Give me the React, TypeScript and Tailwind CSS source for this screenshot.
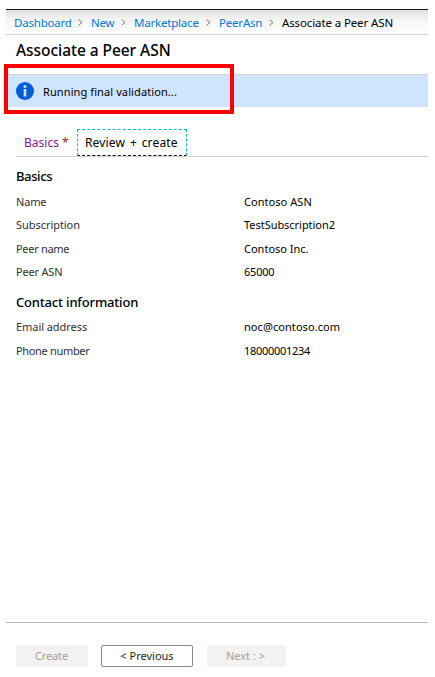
import { Fragment } from 'react';

const crumbs = [
  { label: 'Dashboard', cls: 'w-[57px]' },
  { label: 'New', cls: 'w-[23px]' },
  { label: 'Marketplace', cls: 'w-[65px]' },
  { label: 'PeerAsn', cls: 'w-[43px]' },
];

function Chevron() {
  return (
    <svg width="5" height="7" viewBox="0 0 5 7" className="ml-[7px] mr-[8px] shrink-0" fill="none" stroke="#777" strokeWidth="1">
      <path d="M0.7 0.7 L4 3.5 L0.7 6.3" />
    </svg>
  );
}

function Row({ label, value, labelCls, valueCls }: { label: string; value: string; labelCls: string; valueCls: string }) {
  return (
    <div className="flex h-[23.5px] items-center text-[11px]">
      <div className="w-[228px] text-[#323130]"><span className={labelCls}>{label}</span></div>
      <div><span className={valueCls}>{value}</span></div>
    </div>
  );
}

export default function App() {
  return (
    <div className="relative flex h-[677px] w-[435px] flex-col overflow-hidden whitespace-nowrap bg-white pl-[6px] pr-[7px] pt-[9px] font-['Noto_Sans','Open_Sans',sans-serif] text-black">
      <nav className="flex h-[26px] shrink-0 items-center border-b border-t border-b-[#d2d2d2] border-t-[#1b1b1b] bg-linear-to-b from-[#dedede] via-[#f5f5f5] via-40% to-white pl-[8px] pt-px text-[11.5px]">
        {crumbs.map((c) => (
          <Fragment key={c.label}>
            <a className={`${c.cls} shrink-0 tracking-[-0.2px] text-[#0078d4]`}>{c.label}</a>
            <Chevron />
          </Fragment>
        ))}
        <span className="tracking-[-0.12px]">Associate a Peer ASN</span>
      </nav>
      <h1 className="flex h-[39px] shrink-0 items-center pb-[8px] pl-[10px] text-[15.5px] font-medium tracking-[-0.05px]">Associate a Peer ASN</h1>
      <div className="flex h-[33px] shrink-0 items-center border-t border-[#d2d2d2] bg-[#cfe4ff] pl-[10px] text-[11px]">
        <svg width="18" height="18" viewBox="0 0 18 18" className="mr-[9px]">
          <circle cx="9" cy="9" r="9" fill="#015cda" />
          <circle cx="9" cy="4.6" r="1.5" fill="#cfe4ff" />
          <rect x="7.7" y="7" width="2.6" height="7.5" fill="#cfe4ff" />
        </svg>
        <span className="pt-[2px] tracking-[0.1px]">Running final validation...</span>
      </div>
      <div className="absolute left-[4px] top-[64px] h-[50px] w-[230px] border-4 border-[#ff0000]" />
      <div className="ml-[10px] mt-[22px] flex h-[28px] shrink-0 border-b border-[#d2d2d2] text-[12px]">
        <div className="flex w-[61px] items-center pl-[8px] text-[#881798]">Basics<span className="ml-[3px] text-[#a4262c]">*</span></div>
        <div className="flex h-[27px] w-[110px] items-center border border-dashed border-[#00b4f0] border-b-black pl-[7px] tracking-[0.16px] [word-spacing:1.5px]">Review + create</div>
      </div>
      <main className="ml-[10px]">
        <h2 className="flex h-[33px] items-center pt-[7px] text-[13px] font-medium tracking-[-0.4px]">Basics</h2>
        <Row label="Name" value="Contoso ASN" labelCls="tracking-[-0.2px]" valueCls="tracking-[0.05px]" />
        <Row label="Subscription" value="TestSubscription2" labelCls="tracking-[-0.05px]" valueCls="tracking-[-0.04px]" />
        <Row label="Peer name" value="Contoso Inc." labelCls="tracking-[-0.3px]" valueCls="" />
        <Row label="Peer ASN" value="65000" labelCls="tracking-[-0.2px]" valueCls="tracking-[-0.2px]" />
        <h2 className="flex h-[31px] items-center pt-[6px] text-[13px] font-medium tracking-[-0.18px]">Contact information</h2>
        <Row label="Email address" value="noc@contoso.com" labelCls="tracking-[-0.06px]" valueCls="tracking-[0.07px]" />
        <div className="pt-px">
          <Row label="Phone number" value="18000001234" labelCls="tracking-[-0.33px]" valueCls="tracking-[-0.3px]" />
        </div>
      </main>
      <footer className="mt-auto flex h-[55px] shrink-0 items-start gap-[13px] border-t border-[#b3b3b3] pl-[10px] pt-[22px] text-[11px]">
        <button className="h-[22px] w-[72px] rounded-[2px] bg-[#f3f2f1] pr-px tracking-[-0.1px] text-[#a19f9d]">Create</button>
        <button className="h-[22px] w-[92px] rounded-[2px] border border-[#8a8886] text-[#201f1e]">&lt; Previous</button>
        <button className="ml-px h-[22px] w-[79px] rounded-[2px] bg-[#f3f2f1] pr-[2px] text-[#a19f9d]">Next : &gt;</button>
      </footer>
    </div>
  );
}
